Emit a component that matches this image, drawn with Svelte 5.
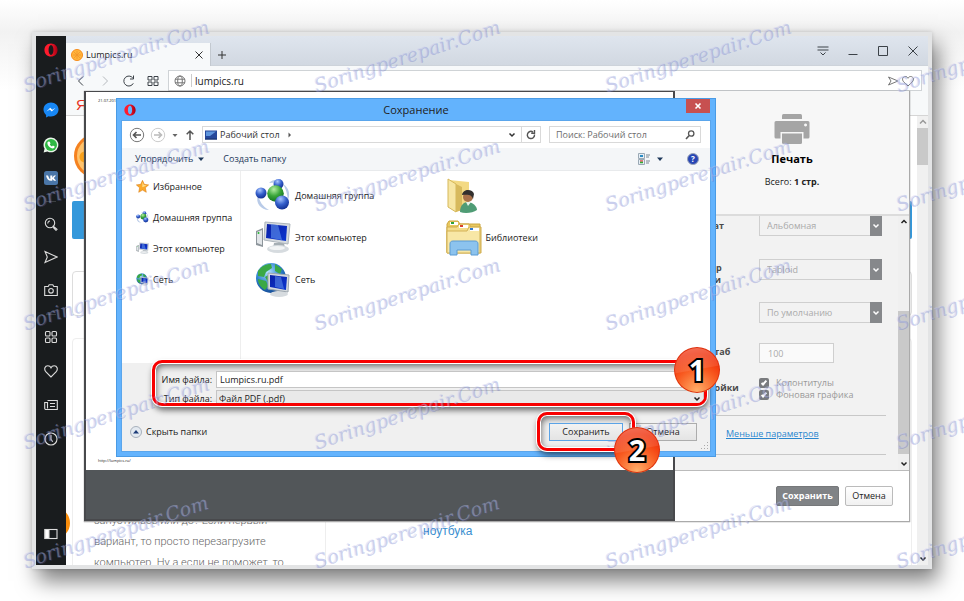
<script>
  const marks = [];
  for (let row = 0; row < 5; row++) {
    for (let col = 0; col < 4; col++) marks.push({ x: 26 + col * 291, y: 74 + row * 119 });
  }

  const papers = [
    { id: 'layout', label: 'Формат', value: 'Альбомная' },
    { id: 'size', label: 'Размер печати', value: 'Tabloid' },
    { id: 'margins', label: 'Поля', value: 'По умолчанию' }
  ];
  const places = [
    { icon: 'star', name: 'Избранное' },
    { icon: 'group', name: 'Домашняя группа' },
    { icon: 'computer', name: 'Этот компьютер' },
    { icon: 'network', name: 'Сеть' }
  ];
  const files = [
    { icon: 'group', name: 'Домашняя группа' },
    { icon: 'user', name: '' },
    { icon: 'computer', name: 'Этот компьютер' },
    { icon: 'library', name: 'Библиотеки' },
    { icon: 'network', name: 'Сеть' }
  ];
</script>

{#snippet opera()}
  <svg viewBox="0 0 16 16" class="i14" aria-hidden="true">
    <defs><linearGradient id="op" x1="0" x2="1"><stop offset="0.4" stop-color="#ff1b2d" /><stop offset="1" stop-color="#a70014" /></linearGradient></defs>
    <path fill="url(#op)" fill-rule="evenodd" d="M8 0.5C12.5 0.5 15.5 3.8 15.5 8S12.5 15.5 8 15.5 0.5 12.2 0.5 8 3.5 0.5 8 0.5ZM8 2.3C6.3 2.3 5.2 4.8 5.2 8S6.3 13.7 8 13.7 10.8 11.2 10.8 8 9.700 2.300 8 2.300Z" />
  </svg>
{/snippet}

{#snippet pic(name)}
  <svg viewBox="0 0 36 36" class="pic" aria-hidden="true">
    {#if name === 'star'}
      <path d="M18 1l5 11 12 1.500-9 8 2.500 12.500L18 28 7.500 34 10 21.500 1 13.500 13 12z" fill="#fba92b" stroke="#d97a10" stroke-width="1.500" />
      <path d="M18 5l3.500 9 8 1-12 5z" fill="#ffdf8a" />
    {:else if name === 'group'}
      <path d="M3 17c-3 8 3 15 11 15C7 28 5 24 3 17zM28 6c7 4 7 12 5 16-1-7-2-11-5-16zM14 5c4-4 10-4 13-1z" fill="#b9cbe8" />
      <circle cx="23.500" cy="6" r="5" fill="url(#gb)" />
      <circle cx="6" cy="15" r="5.500" fill="url(#gb)" />
      <circle cx="20.500" cy="15.500" r="8.300" fill="url(#gg)" />
      <circle cx="27" cy="24.500" r="7" fill="url(#gb)" />
    {:else if name === 'computer'}
      <path d="M1 11l7-3v19l-7-2z" fill="#8d959b" /><path d="M2 12l5-2v15l-5-2z" fill="#e1e5e8" /><circle cx="3.500" cy="13" r="1" fill="#28b431" />
      <path d="M19 23h10l1 5H18z" fill="#a5aeb4" /><ellipse cx="23" cy="29" rx="11" ry="4" fill="#d6dbdf" /><ellipse cx="22" cy="28" rx="8" ry="2" fill="#f2f4f5" />
      <path d="M10 2l25 2-2 20-24-4z" fill="#d5dade" stroke="#adb5bb" /><path d="M12 4l20 2-1 15-20-3z" fill="url(#sc)" /><path d="M16 4l7 1 4 15-11-2z" fill="#6a9cf0" opacity=".55" />
    {:else if name === 'network'}
      <circle cx="16" cy="16" r="15" fill="url(#ge)" />
      <path d="M3 9c4-5 7-7 13-7l1 4-6 4-2 5-6-1zM20 2l7 5-2 5-5-3zM3 17l8 2 2 5-3 4c-5-3-7-7-7-11zM10 15l5-3 3 5-5 3z" fill="#3aa845" />
      <path d="M18 30h10l2 3H16z" fill="#a5aeb4" /><ellipse cx="24" cy="32" rx="9" ry="3" fill="#d6dbdf" />
      <path d="M13 11l21 2-1 17-20-3z" fill="#d5dade" stroke="#9ca6ae" /><path d="M15 13l17 2-1 13-16-3z" fill="url(#sc)" /><path d="M20 14l6 1 3 12-9-2z" fill="#6a9cf0" opacity=".5" />
    {:else if name === 'user'}
      <path d="M3 2l20 2v26l-14 4z" fill="#f3d983" /><path d="M2 1l8 5v28l-8-5z" fill="#f7e6a4" stroke="#d6b85a" /><path d="M10 6l6 3v23l-6 2z" fill="#d7b95c" />
      <path d="M14 34c0-7 4-10 8-10s9 4 9 8c-4 3-12 4-17 2z" fill="#4f9c75" /><path d="M20 24l2 4 3-4z" fill="#e6f3ea" />
      <circle cx="22" cy="19" r="5" fill="#a9714a" /><path d="M16 17c1-7 11-6 12-1l-1 5c-1-4-4-5-11-4z" fill="#33302e" />
    {:else if name === 'library'}
      <path d="M1 4l2-3h9l2 3h20v28H1z" fill="#e9c960" stroke="#cca63e" /><path d="M4 2h8v3H4z" fill="#fff" /><path d="M5 2h3v2H5z" fill="#2da13c" />
      <path d="M1 7h10l2-3h10l2 3h10v26H1z" fill="#f3dc8a" stroke="#cfab4a" /><path d="M13 5h9v3h-9z" fill="#fff" /><path d="M14 5h3v2h-3z" fill="#d8412f" />
      <path d="M1 11h20l2-4h11v26H1z" fill="#f8e7a6" stroke="#d3b256" /><path d="M24 8h9v3h-9z" fill="#fff" /><path d="M24 8h3v2h-3z" fill="#2c78cf" />
      <path d="M4 24c0-2 1-3 3-3h22c2 0 3 1 3 3v11h-7v-5H11v5H4z" fill="#8cc3ee" stroke="#5a9bd4" />
    {/if}
  </svg>
{/snippet}

{#snippet chevron()}
  <svg viewBox="0 0 8 8" class="i8" aria-hidden="true"><path d="M1.500 2.500L4 5l2.500-2.500" fill="none" stroke="currentColor" stroke-width="1.500" /></svg>
{/snippet}

<svg class="defs" aria-hidden="true">
  <radialGradient id="gb" cx=".4" cy=".25" r=".8"><stop offset="0" stop-color="#a9c6ff" /><stop offset=".5" stop-color="#3560cc" /><stop offset="1" stop-color="#0e2a8c" /></radialGradient>
  <radialGradient id="gg" cx=".4" cy=".25" r=".8"><stop offset="0" stop-color="#b5eea4" /><stop offset=".5" stop-color="#3aa63a" /><stop offset="1" stop-color="#0d6a1c" /></radialGradient>
  <radialGradient id="ge" cx=".4" cy=".3" r=".8"><stop offset="0" stop-color="#b4e4ff" /><stop offset=".5" stop-color="#2f83cf" /><stop offset="1" stop-color="#0d3b86" /></radialGradient>
  <linearGradient id="sc" x1="0" x2="1" y2="1"><stop offset="0" stop-color="#0a1fa6" /><stop offset="1" stop-color="#0b36d0" /></linearGradient>
</svg>

<div class="stage">
  <div class="window">
    <nav class="side" aria-label="Боковая панель">
      {@render opera()}
      <svg class="i16 g1" viewBox="0 0 16 16"><path d="M8 .5C3.700.5.5 3.600.5 7.600c0 2.200 1 4 2.600 5.300v2.600l2.400-1.300c.8.2 1.600.3 2.500.3 4.300 0 7.500-3.100 7.500-7S12.300.5 8 .5z" fill="#1787f5" /><path d="M3.500 9.500l3.700-3.800 2 2 3.300-2-3.700 3.900-2-2z" fill="#fff" /></svg>
      <svg class="i16 g2" viewBox="0 0 16 16"><path d="M8 .5a7.400 7.400 0 0 0-6.400 11.200L.6 15.400l3.800-1A7.400 7.400 0 1 0 8 .5z" fill="#eaf5ea" /><circle cx="8" cy="8" r="6" fill="#2eb843" /><path d="M5.500 4.500l1.300.2.700 1.800-.7.9c.6 1 1.300 1.600 2.200 2l.9-.9 1.800.9c0 1.300-1 2-2 2C7 11.200 4.300 8.300 4.400 6c0-.7.500-1.300 1.100-1.500z" fill="#fff" /></svg>
      <svg class="i16 g3" viewBox="0 0 16 16"><rect x="1" y="1" width="14" height="14" rx="2.500" fill="#4a76a8" /><path d="M3 5.500h2l1.300 3 1 .7V5.500h2V7.700L11 5.500h2L10.800 8l2.400 2.800h-2.200L9.300 9v1.800H8C5.300 10.800 3.800 9 3 5.500z" fill="#fff" /></svg>
      <i class="dash g4"></i>
      <svg class="i14 line g5" viewBox="0 0 14 14"><circle cx="6" cy="6" r="4.700" /><path d="M4 6.500A2 2 0 0 1 6 4M9.500 9.500l1 .8 2.500 2-1 1-2.300-2.300z" /></svg>
      <svg class="i14 line g6" viewBox="0 0 14 14"><path d="M1 1.500L13 7 1 12.500 3.300 7zM3.300 7L1 1.500" /></svg>
      <svg class="i14 line g6" viewBox="0 0 14 14"><path d="M.7 3.500h3.500l1-1.800h3.600l1 1.800h3.500v9H.7z" /><circle cx="7" cy="7.800" r="2.300" /></svg>
      <i class="dash g7"></i>
      <svg class="i14 line g8" viewBox="0 0 14 14"><rect x="1.500" y="1.500" width="4.500" height="4.500" rx="1" /><rect x="8" y="1.500" width="4.500" height="4.500" rx="1" /><rect x="1.500" y="8" width="4.500" height="4.500" rx="1" /><rect x="8" y="8" width="4.500" height="4.500" rx="1" /></svg>
      <svg class="i14 line g9" viewBox="0 0 14 14"><path d="M7 13L2 8C-.5 5 1 1.700 3.800 1.700 5.500 1.700 6.500 2.500 7 3.700 7.500 2.500 8.500 1.700 10.200 1.700 13 1.700 14.500 5 12 8z" /></svg>
      <svg class="i14 line g9" viewBox="0 0 14 14"><path d="M3.500 2.500h9.800v9H2A1.300 1.300 0 0 1 .7 10.200V4.500h2.800v6M6 5.500h5M6 8.500h5" /></svg>
      <svg class="i14 line g9" viewBox="0 0 14 14"><circle cx="7" cy="7" r="6" /><path d="M7 3v4.300l1.700 2.500" /></svg>
      <svg class="i14 line end" viewBox="0 0 14 14"><rect x="1" y="2.500" width="12" height="9" /><path d="M1 2.500h4v9H1z" fill="#fff" /></svg>
    </nav>

    <div class="browser">
      <header class="tabs">
        <div class="tab">
          <svg class="i12" viewBox="0 0 12 12"><circle cx="6" cy="6" r="5.500" fill="#ffb53c" stroke="#f78c1a" /><path d="M6 2v8M2 6h8M3 3l6 6M9 3L3 9" stroke="#f2952a" stroke-width=".8" /></svg>
          <span>Lumpics.ru</span>
          <button aria-label="Закрыть вкладку"><svg class="i8" viewBox="0 0 8 8"><path d="M.5.5l7 7M7.500.5l-7 7" stroke="#333" /></svg></button>
        </div>
        <button class="plus" aria-label="Новая вкладка"><svg class="i8" viewBox="0 0 8 8"><path d="M4 0v8M0 4h8" stroke="#333" /></svg></button>
        <div class="sys">
          <button aria-label="Меню вкладок"><svg class="i12" viewBox="0 0 12 12"><path d="M.5 2h11M.5 5h11M3.500 7.500L6 10l2.500-2.500" /></svg></button>
          <button aria-label="Свернуть"><svg class="i12" viewBox="0 0 12 12"><path d="M1.500 9.500h9" /></svg></button>
          <button aria-label="Развернуть"><svg class="i12" viewBox="0 0 12 12"><path d="M1.500 1.500h9v9h-9z" /></svg></button>
          <button aria-label="Закрыть"><svg class="i12" viewBox="0 0 12 12"><path d="M1.500 1.500l9 9M10.500 1.500l-9 9" /></svg></button>
        </div>
      </header>

      <div class="address">
        <button aria-label="Назад"><svg class="i12" viewBox="0 0 12 12"><path d="M8 1.500L3.500 6 8 10.500" /></svg></button>
        <button aria-label="Вперёд" class="dim"><svg class="i12" viewBox="0 0 12 12"><path d="M4 1.500L8.500 6 4 10.500" /></svg></button>
        <button aria-label="Обновить"><svg class="i12" viewBox="0 0 12 12"><path d="M10.300 8.300A5 5 0 1 1 9.800 3M10.500.5V4H7" /></svg></button>
        <button aria-label="Экспресс-панель"><svg class="i12" viewBox="0 0 12 12"><path d="M1 1.500h4v3.500H1zM7 1.500h4v3.500H7zM1 7h4v3.500H1zM7 7h4v3.500H7z" /></svg></button>
        <div class="url">
          <svg class="i12 gray" viewBox="0 0 12 12"><circle cx="6" cy="6" r="5" /><ellipse cx="6" cy="6" rx="2.300" ry="5" /><path d="M1 4.200h10M1 7.800h10" /></svg>
          <input aria-label="Адрес" value="lumpics.ru" />
          <svg class="i12 gray" viewBox="0 0 12 12"><path d="M1.500 2L11 6l-9.500 4L4 6z" /></svg>
          <svg class="i12 gray" viewBox="0 0 12 12"><path d="M6 11L1.500 6.700C-.5 4.200 1 1.500 3.300 1.500 4.700 1.500 5.600 2.300 6 3.300 6.400 2.300 7.300 1.500 8.700 1.500 11 1.500 12.500 4.200 10.500 6.700z" /></svg>
        </div>
      </div>

      <div class="page">
        <div class="yandex">Я</div>
        <div class="site">
          <div class="content">
            <div class="logo"></div>
            <div class="menu"></div>
            <div class="card"></div>
            <div class="article">
              <p>запустилась или до? Если первый вариант, то просто перезагрузите компьютер. Ну а если не поможет, то</p>
              <a href="#laptop">ноутбука</a>
            </div>
            <span class="orange"></span>
          </div>
          <div class="scroll">
            <svg class="i8" viewBox="0 0 8 8"><path d="M1 5.500l3-3 3 3" fill="none" stroke="#999" stroke-width="1.500" /></svg>
            <i></i>
            {@render chevron()}
          </div>
        </div>

        <section class="print" aria-label="Печать">
          <div class="preview"><div class="sheet"><small>21.07.2018</small><small>http://lumpics.ru/</small></div></div>
          <div class="panel">
            <div class="summary">
              <svg class="printer" viewBox="0 0 36 30"><g fill="#a5a5a5"><path d="M8 5V1.500Q8 0 9.500 0h17Q28 0 28 1.500V5z" /><path fill-rule="evenodd" d="M2 7h32q1.500 0 1.500 1.500V23q0 1.500-1.500 1.500h-4.500v-6.500h-23v6.500H2Q.5 24.500.5 23V8.500Q.5 7 2 7zM31.500 9.500a1.500 1.500 0 1 0 .1 0z" /><path d="M8 19.500h20v9q0 1.500-1.500 1.500h-17Q8 30 8 28.500z" /></g></svg>
              <h2>Печать</h2>
              <p>Всего: <b>1 стр.</b></p>
            </div>
            <div class="options">
              <div class="optlist">
                {#each papers as p}
                  <div class="opt">
                    <label for={p.id}>{p.label}</label>
                    <div class="sel"><select id={p.id} disabled><option>{p.value}</option></select><span>{@render chevron()}</span></div>
                  </div>
                {/each}
                <div class="opt scale"><label for="scale">Масштаб</label><input id="scale" value="100" disabled /></div>
                <div class="opt checks">
                  <b>Настройки</b>
                  <div>
                    <label><input type="checkbox" checked disabled />Колонтитулы</label>
                    <label><input type="checkbox" checked disabled />Фоновая графика</label>
                  </div>
                </div>
                <div class="less"><a href="#less">Меньше параметров</a></div>
              </div>
              <div class="scroll inner">
                <svg class="i8" viewBox="0 0 8 8"><path d="M1.500 5L4 2.500 6.500 5" fill="none" stroke="#222" stroke-width="1.500" /></svg>
                <i></i>
                {@render chevron()}
              </div>
            </div>
            <div class="actions"><button class="primary">Сохранить</button><button>Отмена</button></div>
          </div>

          <section class="dialog" aria-label="Сохранение">
            <header>
              {@render opera()}
              <h1>Сохранение</h1>
              <button class="close" aria-label="Закрыть окно"><svg class="i8" viewBox="0 0 8 8"><path d="M1.500 1.500l5 5M6.500 1.500l-5 5" stroke="#fff" stroke-width="1.600" /></svg></button>
            </header>
            <div class="body">
              <div class="nav">
                <svg class="i16" viewBox="0 0 16 16"><circle cx="8" cy="8" r="6.700" fill="none" stroke="#777" /><path d="M12 8H4.500M7.500 5l-3 3 3 3" fill="none" stroke="#555" stroke-width="1.600" /></svg>
                <svg class="i16" viewBox="0 0 16 16"><circle cx="8" cy="8" r="6.700" fill="none" stroke="#ccc" /><path d="M4 8h7.500M8.500 5l3 3-3 3" fill="none" stroke="#bbb" stroke-width="1.600" /></svg>
                <svg class="i8" viewBox="0 0 8 8"><path d="M1.500 3h5L4 6z" fill="#666" /></svg>
                <svg class="i12" viewBox="0 0 12 12"><path d="M6 11V2M2.700 5.300L6 2l3.300 3.300" fill="none" stroke="#555" stroke-width="1.500" /></svg>
                <div class="crumb">
                  <svg class="i12" viewBox="0 0 12 12"><rect y="1.500" width="12" height="9" fill="#25479b" /><path d="M1 2.500h10L5 7H1z" fill="#5e95dd" /><path d="M0 9.500h12v1H0z" fill="#173169" /></svg>
                  <span>Рабочий стол</span>
                  <svg class="i8 right" viewBox="0 0 8 8"><path d="M2.500 1.500L5 4 2.500 6.500z" fill="#555" /></svg>
                  {@render chevron()}
                  <button aria-label="Обновить папку"><svg class="i12" viewBox="0 0 12 12"><path d="M9.500 5.500A3.600 3.600 0 1 1 8 3M9.500 1v3.300H6.200" fill="none" stroke="#555" stroke-width="1.400" /></svg></button>
                </div>
                <div class="search">
                  <input aria-label="Поиск" placeholder="Поиск: Рабочий стол" />
                  <svg class="i12" viewBox="0 0 12 12"><circle cx="7.200" cy="4.500" r="2.700" fill="none" stroke="#555" stroke-width="1.300" /><path d="M5.200 6.500L2 10" stroke="#555" stroke-width="1.600" /></svg>
                </div>
              </div>
              <div class="tools">
                <button>Упорядочить <svg class="i8" viewBox="0 0 8 8"><path d="M1 2.500h6L4 6z" fill="#1e395b" /></svg></button>
                <button>Создать папку</button>
                <button class="view" aria-label="Вид"><svg class="i12" viewBox="0 0 12 12"><path d="M.5.5h6v5h-6zM.5 6.500h6v5h-6z" fill="#e6eef5" stroke="#9aa9b5" /><path d="M2 3h3" stroke="#2b8cc4" stroke-width="2" /><path d="M2 8h3" stroke="#d55" stroke-width="1.500" /><path d="M2 9.500h3" stroke="#3a3" stroke-width="1.500" /><path d="M8 2h4M8 4h3M8 8h4M8 10h3" stroke="#7a8894" /></svg><svg class="i8" viewBox="0 0 8 8"><path d="M1 2.500h6L4 6z" fill="#1e395b" /></svg></button>
                <button class="help" aria-label="Справка">?</button>
              </div>
              <div class="explorer">
                <ul class="places">
                  {#each places as p}<li>{@render pic(p.icon)}{p.name}</li>{/each}
                </ul>
                <ul class="files">
                  {#each files as f}<li>{@render pic(f.icon)}{f.name}</li>{/each}
                </ul>
              </div>
              <div class="foot">
                <div class="fields">
                  <label for="fname">Имя файла:</label><input id="fname" value="Lumpics.ru.pdf" />
                  <label for="ftype">Тип файла:</label>
                  <div class="type"><select id="ftype"><option>Файл PDF (.pdf)</option></select>{@render chevron()}</div>
                </div>
                <span class="badge one">1</span>
                <div class="buttons">
                  <button class="hide"><svg class="i12" viewBox="0 0 12 12"><circle cx="6" cy="6" r="5.500" fill="#e3e9f0" stroke="#a7b0bb" /><path d="M3 7.500h6L6 4z" fill="#1d3c78" /></svg>Скрыть папки</button>
                  <div class="savebox"><span class="ring"></span><button class="save">Сохранить</button><span class="badge two">2</span></div>
                  <button class="cancel">Отмена</button>
                </div>
                <svg class="grip" viewBox="0 0 8 8"><path d="M6 0h1v1H6zM6 3h1v1H6zM6 6h1v1H6zM3 3h1v1H3zM3 6h1v1H3zM0 6h1v1H0z" fill="#aaa" /></svg>
              </div>
            </div>
          </section>
        </section>
      </div>
    </div>
  </div>

  <div class="marks" aria-hidden="true">
    {#each marks as m}<span style="left: {m.x}px; top: {m.y}px">Soringperepair.Com</span>{/each}
  </div>
</div>

<style>
  :global(body) { margin: 0; background: #fff; }
  * { box-sizing: border-box; }
  .defs { position: absolute; width: 0; height: 0; }
  .stage { position: relative; overflow: hidden; min-height: 100vh; padding: 32px; display: flex; font: 9px/12px 'Open Sans', 'Noto Sans', sans-serif; color: #222; background: linear-gradient(#fff, #f2f2f2 32px, #fff 90px); }
  button { font: inherit; color: inherit; border: 0; padding: 0; background: none; display: flex; align-items: center; justify-content: center; }
  input, select { font: inherit; color: inherit; border: 0; padding: 0; margin: 0; background: none; min-width: 0; outline: 0; appearance: none; opacity: 1; }
  ul, p, h1, h2 { margin: 0; padding: 0; list-style: none; font-weight: 400; }
  svg { flex: none; display: block; }
  .i8 { width: 8px; height: 8px; }
  .i12 { width: 12px; height: 12px; }
  .i14 { width: 14px; height: 14px; }
  .i16 { width: 16px; height: 16px; }

  .window { flex: 1; display: flex; border: 4px solid #e3e4e5; box-shadow: 6px 12px 20px rgba(0, 0, 0, .5), 0 0 4px rgba(0, 0, 0, .15); background: #fff; }
  .side { width: 30px; background: #191c1e; display: flex; flex-direction: column; align-items: center; padding: 7px 0 24px; }
  .line { fill: none; stroke: #dcdcdc; stroke-width: 1.1; }
  .dash { width: 10px; height: 1px; background: #3c4042; }
  .g1 { margin-top: 45px; } .g2 { margin-top: 19px; } .g3 { margin-top: 17px; } .g4 { margin-top: 15px; } .g5 { margin-top: 15px; }
  .g6 { margin-top: 19px; } .g7 { margin-top: 17px; } .g8 { margin-top: 15px; } .g9 { margin-top: 20px; } .end { margin-top: auto; }

  .browser { flex: 1; min-width: 0; display: flex; flex-direction: column; }
  .tabs { height: 30px; display: flex; align-items: center; background: linear-gradient(#dfe5ee, #d1d8e1); border-bottom: 1px solid #cdd3da; }
  .tab { align-self: flex-end; height: 23px; width: 145px; margin-bottom: -1px; padding: 0 7px 0 5px; display: flex; align-items: center; gap: 3px; background: #f7f9fa; border-right: 1px solid #c3c9d0; }
  .tab button { margin-left: auto; }
  .plus { margin-left: 7px; margin-top: 8px; }
  .sys { margin-left: auto; padding-right: 9px; display: flex; gap: 18px; }
  .sys svg, .address svg { fill: none; stroke: #3c4248; }
  .address { height: 25px; background: #f7f9fa; display: flex; align-items: center; padding: 4px 6px 0 9px; gap: 12px; }
  .address .dim svg { stroke: #b5b9bd; }
  .url { flex: 1; height: 21px; margin-left: -3px; padding: 0 7px 0 5px; border: 1px solid #cfd3d6; background: #fff; display: flex; align-items: center; gap: 3px; }
  .address .gray { stroke: #777; }
  .url input { flex: 1; height: 13px; margin-left: 2px; padding-left: 3px; border-left: 1px solid #ccc; font-size: 10px; }

  .page { position: relative; flex: 1; display: flex; flex-direction: column; }
  .yandex { height: 25px; padding: 5px 10px; background: #f7f9fa; border-bottom: 1px solid #d5d5d5; color: #e8321e; font: 15px/18px 'Liberation Sans', sans-serif; }
  .site { flex: 1; display: flex; }
  .content { position: relative; overflow: hidden; flex: 1; padding: 18px 5px 0 6px; display: flex; flex-direction: column; height: 449px; }
  .logo { width: 44px; height: 44px; margin: 0 0 23px 2px; border-radius: 50%; border: 3px solid #f58220; background: radial-gradient(circle at 8px 20px, #f9a11b 5px, #ffc36b 6px); flex: none; }
  .menu { flex: none; height: 38px; background: #3498db; border-radius: 2px; }
  .card { flex: none; height: 45px; margin-top: 32px; border: 1px solid #ddd; border-radius: 4px; }
  .article { flex: 1; margin: 22px 0 -4px; border: 1px solid #eee; border-radius: 4px; padding: 171px 0 0 21px; display: flex; font: 11px/21px Roboto, sans-serif; font-weight: 300; color: #666; }
  .article p { width: 232px; padding-right: 22px; border-right: 1px solid #eee; font-weight: 300; }
  .article a { margin: 11px 0 0 97px; font: 12px/21px 'Liberation Sans', sans-serif; color: #3b8fd0; text-decoration: none; }
  .orange { position: absolute; left: -28px; top: 391px; width: 32px; height: 32px; border-radius: 50%; background: #f98d0b; }
  .scroll { width: 11px; background: #f0f0f0; display: flex; flex-direction: column; align-items: center; padding: 2px 0; color: #222; }
  .scroll i { width: 100%; height: 37px; margin: 2px 0 auto; background: #c9c9c9; }

  .print { position: absolute; top: 0; left: 18px; right: 18px; height: 431px; display: flex; border-bottom: 1px solid #aaa; box-shadow: 0 0 1px #777; }
  .preview { flex: 1; background: #525659; border: 2px solid #48494c; border-top-width: 1px; }
  .sheet { height: 378px; background: #fff; padding: 6px 12px; display: flex; flex-direction: column; justify-content: space-between; font-size: 4px; line-height: 6px; }
  .sheet small { font-size: 4px; }
  .panel { width: 235px; display: flex; flex-direction: column; background: #fff; border-right: 1px solid #aaa; }
  .summary { height: 126px; background: #f7f7f7; border-bottom: 2px solid #dcdcdc; padding-top: 23px; display: flex; flex-direction: column; align-items: center; }
  .printer { width: 36px; height: 30px; }
  .summary h2 { font-size: 11px; line-height: 16px; font-weight: 700; color: #000; margin: 7px 0 9px; }
  .options { height: 256px; display: flex; background: #f2f2f2; border-bottom: 1px solid #bbb; overflow: hidden; }
  .optlist { flex: 1; padding: 0 12px; overflow: hidden; }
  .opt { height: 43px; display: flex; align-items: flex-start; }
  .opt > label, .opt > b { width: 72px; padding-right: 20px; font-weight: 700; color: #4a4a4a; }
  .opt > label { padding-top: 3px; }
  .sel { width: 123px; height: 21px; border: 1px solid #cfcfcf; display: flex; color: #aaa; }
  .opt:first-child .sel { margin-top: -1px; }
  .opt:first-child > label { padding-top: 4px; }
  .opt:nth-child(3) { height: 41px; }
  .sel select { flex: 1; padding-left: 7px; }
  .sel span { width: 12px; margin: -1px; background: #86888b; color: #fff; display: flex; align-items: center; justify-content: center; }
  .opt.scale { height: 34px; }
  .opt.scale input { width: 75px; height: 20px; border: 1px solid #cfcfcf; background: #fafafa; padding-left: 8px; color: #aaa; }
  .opt.checks { height: 39px; color: #999; border-bottom: 1px solid #c8c8c8; }
  .opt.checks b { padding-top: 5px; }
  .checks div label { display: flex; align-items: center; height: 12px; gap: 7px; }
  .checks input { width: 10px; height: 10px; border-radius: 2px; background: #797b7e; display: grid; place-items: center; }
  .checks input::after { content: ''; width: 4px; height: 1px; margin-top: -2px; border: solid #fff; border-width: 0 0 2px 2px; box-sizing: content-box; transform: rotate(-48deg); }
  .less { height: 39px; padding: 12px 0 0 39px; border-bottom: 1px solid #c8c8c8; }
  .less a { color: #2a87cf; }
  .inner i { margin-top: 85px; height: 143px; }
  .actions { flex: 1; display: flex; justify-content: flex-end; gap: 6px; padding: 15px 16px; font-size: 9px; }
  .actions button { width: 48px; height: 20px; border: 1px solid #bbb; border-radius: 2px; background: linear-gradient(#fff, #f1f1f1); }
  .actions .primary { width: 63px; background: #808386; border-color: #76787a; color: #fff; font-weight: 700; }

  .dialog { position: absolute; top: 7px; left: 32px; right: 194px; background: #63b3fd; border: 1px solid #4a9be5; padding: 0 5px 5px; }
  .dialog header { height: 22px; display: grid; grid-template-columns: 24px 1fr 24px; align-items: center; }
  .dialog header .i14 { width: 12px; height: 12px; margin-left: 2px; }
  .dialog h1 { font-size: 11px; line-height: 16px; text-align: center; }
  .close { align-self: start; height: 14px; background: #c75050; }
  .body { border: 1px solid #5ba6ec; background: #fff; margin: -1px -1px -1px; }
  .nav { height: 27px; display: flex; align-items: center; padding: 0 9px 0 7px; gap: 5px; }
  .crumb { flex: 1; height: 17px; margin-left: 1px; border: 1px solid #d9d9d9; display: flex; align-items: center; padding-left: 2px; gap: 3px; color: #333; }
  .crumb .right { margin: 0 auto 0 3px; }
  .crumb button { width: 19px; height: 15px; border-left: 1px solid #d9d9d9; margin-left: 2px; }
  .search { width: 152px; height: 17px; margin-left: 3px; border: 1px solid #d9d9d9; display: flex; align-items: center; padding: 0 4px 0 6px; }
  .search input { flex: 1; }
  .search input::placeholder { color: #6d6d6d; opacity: 1; }
  .tools { height: 23px; background: #f4f6f8; border-bottom: 1px solid #e8eaec; display: flex; align-items: center; gap: 18px; padding: 0 11px 0 13px; color: #1e395b; }
  .tools button { gap: 4px; }
  .view { margin-left: auto; }
  .tools .view { gap: 6px; margin-right: 5px; }
  .tools .help { width: 12px; height: 12px; border-radius: 50%; border: 1px solid #9aa3b8; background: #2746b5; color: #fff; font-weight: 700; font-size: 8px; }
  .explorer { height: 192px; display: flex; }
  .places { width: 119px; border-right: 1px solid #eee; padding-left: 14px; }
  .places li { display: flex; align-items: center; gap: 4px; height: 31px; white-space: nowrap; }
  .places .pic { width: 13px; height: 13px; }
  .files { flex: 1; padding: 4px 74px 0 14px; display: grid; grid-template-columns: 1fr 1fr; grid-auto-rows: 42px; }
  .files li { display: flex; align-items: center; gap: 4px; }
  .files .pic { width: 36px; height: 36px; }
  .foot { position: relative; background: #f0f0f0; padding: 0 3px 10px 30px; }
  .fields { position: relative; top: -3px; height: 46px; overflow: hidden; display: grid; grid-template-columns: 57px 1fr; grid-template-rows: 17px 17px; column-gap: 4px; row-gap: 2px; align-items: center; padding-top: 8px; text-align: right; border: 3px solid #f80000; border-radius: 10px; box-shadow: 0 0 0 1px #fff, 1px 4px 6px rgba(0, 0, 0, .6), inset 0 0 0 1px #fff, inset 1px 3px 7px rgba(0, 0, 0, .6); }
  .fields input { height: 17px; background: #fff; border: 1px solid #c5c5c5; padding-left: 3px; }
  .type { height: 17px; border: 1px solid #c5c5c5; background: #e9e9e9; display: flex; align-items: center; padding-right: 2px; }
  .type select { flex: 1; padding-left: 2px; }
  .buttons { display: flex; align-items: center; padding-right: 10px; margin: 14px 0 0 -22px; }
  .hide { gap: 4px; margin-right: auto; }
  .savebox { position: relative; z-index: 1; }
  .save, .cancel { height: 18px; background: linear-gradient(#f2f2f2, #e4e4e4); border: 1px solid #acacac; }
  .save { position: relative; width: 74px; border-color: #5ba3e6; }
  .cancel { width: 68px; margin-left: 6px; }
  .ring { position: absolute; inset: -11px -12px -10px; border: 3px solid #f80000; border-radius: 10px; box-shadow: 0 0 0 1px #fff, 1px 4px 6px rgba(0, 0, 0, .6), inset 0 0 0 1px #fff, inset 1px 3px 7px rgba(0, 0, 0, .6); }
  .badge { position: absolute; width: 46px; height: 46px; border-radius: 50%; display: grid; place-items: center; font: 700 29px/40px 'Open Sans', sans-serif; color: #fff; -webkit-text-stroke: 4px #000; paint-order: stroke fill; background: linear-gradient(170deg, rgba(255, 255, 255, .35), rgba(255, 255, 255, .1) 48%, transparent 50%), radial-gradient(circle at 50% 95%, #ffae68, #f85a20 45%, #ef2a04 75%); box-shadow: inset 0 0 0 1px #dc2f0c; }
  .one { right: -10px; top: -16px; }
  .two { left: 65px; top: 4px; }
  .grip { position: absolute; right: 1px; bottom: 1px; width: 8px; height: 8px; }

  .marks { position: absolute; inset: 0; overflow: hidden; pointer-events: none; }
  .marks span { position: absolute; transform: rotate(-18deg); transform-origin: 0 100%; font: italic 19px/22px 'DejaVu Serif', serif; color: rgba(190, 200, 240, .4); text-shadow: 1px 1px rgba(90, 100, 190, .3); white-space: nowrap; }
</style>
